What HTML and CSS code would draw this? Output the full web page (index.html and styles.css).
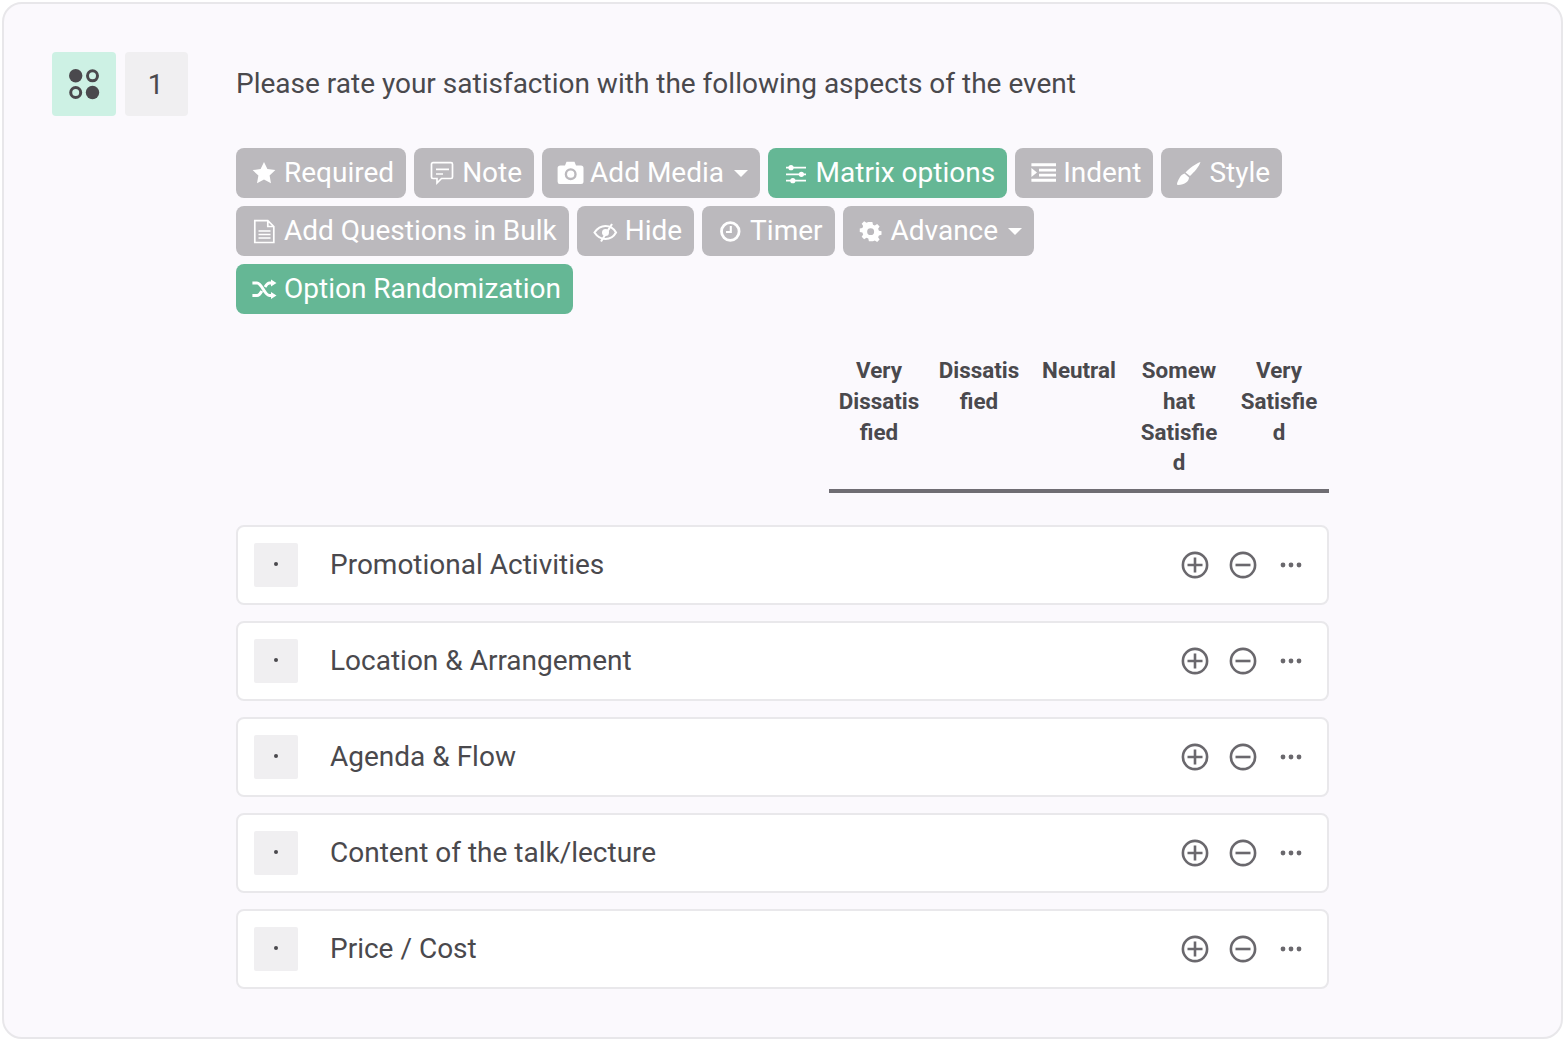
FILE: index.html
```html
<!DOCTYPE html>
<html lang="en">
<head>
<meta charset="utf-8">
<title>Matrix question</title>
<link rel="stylesheet" href="styles.css">
</head>
<body>
<main class="card">
  <div class="question-head">
    <div class="type-badge">
      <svg class="type-icon" viewBox="0 0 32 32"><circle cx="7.700" cy="7.800" r="6.700"/><circle cx="24.500" cy="7.800" r="5" class="ring"/><circle cx="7.700" cy="24.500" r="5" class="ring"/><circle cx="24.500" cy="24.500" r="6.700"/></svg>
    </div>
    <div class="num-badge">1</div>
    <div class="question-text">Please rate your satisfaction with the following aspects of the event</div>
  </div>

  <div class="body">
    <div class="toolbar">
      <button class="tool"><svg class="ic" viewBox="0 0 24 24"><path class="f" d="M12 1l3.400 7 8 1.100-5.800 5.400 1.400 7.700-7-3.700-7 3.700 1.400-7.700L.6 9.100l8-1.100z"/></svg>Required</button>
      <button class="tool"><svg class="ic" viewBox="0 0 24 24"><path class="s" d="M3 1.700h18a1.500 1.500 0 0 1 1.500 1.500v12.800a1.500 1.500 0 0 1-1.500 1.500H11.500L7 22v-4.500H3A1.500 1.500 0 0 1 1.500 16V3.200A1.500 1.500 0 0 1 3 1.700z"/><path class="s" d="M6 8.300h13M6 13h7"/></svg>Note</button>
      <button class="tool"><svg class="ic" viewBox="0 0 24 24"><path class="f" fill-rule="evenodd" d="M2.500 4.500h4.500L8.500.7h8L18 4.500h5a2.500 2.500 0 0 1 2.500 2.500v13.500a2.500 2.500 0 0 1-2.500 2.500h-20.500A2.500 2.500 0 0 1-.4 20.500V7a2.900 2.500 0 0 1 2.900-2.500zm10.200 2.700a6 6 0 1 0 0 12 6 6 0 0 0 0-12z"/><circle class="f" cx="12.700" cy="13.200" r="3.600"/></svg>Add Media<span class="caret"></span></button>
      <button class="tool on tight"><svg class="ic" viewBox="0 0 24 24"><path class="s" d="M2 6.700h20M2 13.300h20M2 19.700h20"/><circle class="f" cx="7" cy="6.700" r="2.600"/><circle class="f" cx="17.400" cy="13.300" r="2.600"/><circle class="f" cx="8.800" cy="19.700" r="2.600"/></svg>Matrix options</button>
      <button class="tool"><svg class="ic" viewBox="0 0 24 24"><path class="f" d="M.4 2.300H25v3H.4zM8 7.700h17v2.700H8zM8 12.700h17v2.700H8zM.4 17.800H25v3H.4zM.4 7l5.600 4.500L.4 16z"/></svg>Indent</button>
      <button class="tool"><svg class="ic" viewBox="0 0 24 24"><path class="f" d="M23.500 1C22 6 17 11 13 15l-4.500-3.500C12 7.500 18 3 23.500 1z"/><path class="f" d="M7.500 12.500l4.500 4C12 20 8 24 1 24c-1.500 0-1-2-.5-3C2 18 3 14 7.500 12.500z"/></svg>Style</button>
      <button class="tool"><svg class="ic" viewBox="0 0 24 24"><path class="s" d="M2.800 1.700h13l6 5.800v16H2.800zM15.800 1.700v5.800h6M6.500 12h12M6.500 15.500h12M6.500 19h12"/></svg>Add Questions in Bulk</button>
      <button class="tool"><svg class="ic" viewBox="0 0 24 24"><path class="s bold" d="M1.500 13.500C4.500 9 8 7 12.500 7s8 2 10.500 6.500c-2.500 4.500-6 6.500-10.500 6.500S4.500 18 1.500 13.500z"/><circle class="f" cx="12.500" cy="13.500" r="3.500"/><path class="s bold" d="M19 5L8 22.500"/></svg>Hide</button>
      <button class="tool"><svg class="ic" viewBox="0 0 24 24"><circle class="s thick" cx="12.300" cy="12.500" r="8.800"/><path class="s bold" d="M12.800 7v6H8"/></svg>Timer</button>
      <button class="tool"><svg class="ic" viewBox="0 0 24 24"><path class="f" transform="translate(1.200 2.200) scale(.87)" fill-rule="evenodd" d="M10 1h4l.7 3.100 2.100.9 2.700-1.700 2.800 2.800-1.700 2.700.9 2.100 3 .7v4l-3 .7-.9 2.100 1.700 2.700-2.800 2.800-2.700-1.700-2.100.9L14 23h-4l-.7-3.100-2.100-.9-2.700 1.700-2.800-2.800 1.700-2.700-.9-2.100-3-.7v-4l3-.7.9-2.100-1.700-2.700 2.800-2.800 2.700 1.700 2.100-.9zm2 7a4 4 0 1 0 0 8 4 4 0 0 0 0-8z"/></svg>Advance<span class="caret"></span></button>
      <button class="tool on"><svg class="ic" viewBox="0 0 24 24"><path class="s heavy" d="M.4 6h4.600c5 0 7.500 12.500 12.500 12.500h2.500M.4 18.500h4.600c2 0 3.500-2 4.800-4.500M13 10c1.300-2.200 2.700-4 4.500-4h2.500"/><path class="f" d="M19 2.500L24.500 6 19 9.500zM19 15L24.500 18.500 19 22z"/></svg>Option Randomization</button>
    </div>

    <div class="matrix-head">
      <div class="col">Very Dissatisfied</div>
      <div class="col">Dissatisfied</div>
      <div class="col">Neutral</div>
      <div class="col">Somewhat Satisfied</div>
      <div class="col">Very Satisfied</div>
    </div>

    <div class="rows">
      <div class="row">
        <div class="handle"><span class="dot"></span></div>
        <div class="label">Promotional Activities</div>
        <div class="actions">
          <svg class="act" viewBox="0 0 28 28"><circle cx="14" cy="14" r="12.100"/><path d="M14 6.500v15M6.500 14h15"/></svg>
          <svg class="act" viewBox="0 0 28 28"><circle cx="14" cy="14" r="12.100"/><path d="M6.500 14h15"/></svg>
          <svg class="act more" viewBox="0 0 28 28"><circle cx="6" cy="14" r="2.400"/><circle cx="14" cy="14" r="2.400"/><circle cx="22" cy="14" r="2.400"/></svg>
        </div>
      </div>
      <div class="row">
        <div class="handle"><span class="dot"></span></div>
        <div class="label">Location &amp; Arrangement</div>
        <div class="actions">
          <svg class="act" viewBox="0 0 28 28"><circle cx="14" cy="14" r="12.100"/><path d="M14 6.500v15M6.500 14h15"/></svg>
          <svg class="act" viewBox="0 0 28 28"><circle cx="14" cy="14" r="12.100"/><path d="M6.500 14h15"/></svg>
          <svg class="act more" viewBox="0 0 28 28"><circle cx="6" cy="14" r="2.400"/><circle cx="14" cy="14" r="2.400"/><circle cx="22" cy="14" r="2.400"/></svg>
        </div>
      </div>
      <div class="row">
        <div class="handle"><span class="dot"></span></div>
        <div class="label">Agenda &amp; Flow</div>
        <div class="actions">
          <svg class="act" viewBox="0 0 28 28"><circle cx="14" cy="14" r="12.100"/><path d="M14 6.500v15M6.500 14h15"/></svg>
          <svg class="act" viewBox="0 0 28 28"><circle cx="14" cy="14" r="12.100"/><path d="M6.500 14h15"/></svg>
          <svg class="act more" viewBox="0 0 28 28"><circle cx="6" cy="14" r="2.400"/><circle cx="14" cy="14" r="2.400"/><circle cx="22" cy="14" r="2.400"/></svg>
        </div>
      </div>
      <div class="row">
        <div class="handle"><span class="dot"></span></div>
        <div class="label">Content of the talk/lecture</div>
        <div class="actions">
          <svg class="act" viewBox="0 0 28 28"><circle cx="14" cy="14" r="12.100"/><path d="M14 6.500v15M6.500 14h15"/></svg>
          <svg class="act" viewBox="0 0 28 28"><circle cx="14" cy="14" r="12.100"/><path d="M6.500 14h15"/></svg>
          <svg class="act more" viewBox="0 0 28 28"><circle cx="6" cy="14" r="2.400"/><circle cx="14" cy="14" r="2.400"/><circle cx="22" cy="14" r="2.400"/></svg>
        </div>
      </div>
      <div class="row">
        <div class="handle"><span class="dot"></span></div>
        <div class="label">Price / Cost</div>
        <div class="actions">
          <svg class="act" viewBox="0 0 28 28"><circle cx="14" cy="14" r="12.100"/><path d="M14 6.500v15M6.500 14h15"/></svg>
          <svg class="act" viewBox="0 0 28 28"><circle cx="14" cy="14" r="12.100"/><path d="M6.500 14h15"/></svg>
          <svg class="act more" viewBox="0 0 28 28"><circle cx="6" cy="14" r="2.400"/><circle cx="14" cy="14" r="2.400"/><circle cx="22" cy="14" r="2.400"/></svg>
        </div>
      </div>
    </div>
  </div>
</main>
</body>
</html>
```

FILE: styles.css
```css
* { box-sizing: border-box; }

html, body { height: 100%; }

body {
  margin: 0;
  padding: 2px;
  background: #fff;
  font-family: Roboto, "Liberation Sans", sans-serif;
  color: #4a494d;
}

.card {
  width: 1561px;
  height: 1037px;
  background: #fbf9fd;
  border: 2px solid #e8e7ea;
  border-radius: 20px;
  padding: 48px;
}

.question-head {
  display: flex;
  gap: 9px;
  align-items: flex-start;
}

.type-badge,
.num-badge {
  width: 64px;
  height: 64px;
  border-radius: 4px;
  display: flex;
  align-items: center;
  justify-content: center;
  flex: none;
}

.type-badge { background: #cdf1e4; }
.num-badge { background: #f0eff1; font-size: 28px; width: 63px; padding-right: 2px; }

.type-icon { width: 32px; height: 32px; fill: #4a494d; }
.type-icon .ring { fill: none; stroke: #4a494d; stroke-width: 3; }

.question-text {
  font-size: 28px;
  line-height: 64px;
  margin-left: 39px;
  height: 64px;
}

.body {
  margin-left: 184px;
  width: 1093px;
}

.toolbar {
  display: flex;
  flex-wrap: wrap;
  gap: 8px;
  margin-top: 32px;
}

.tool {
  display: inline-flex;
  align-items: center;
  height: 50px;
  padding: 0 12px 0 16px;
  border: 0;
  border-radius: 8px;
  background: #bbb9bd;
  color: #fff;
  font: 400 28px/50px Roboto, "Liberation Sans", sans-serif;
  white-space: nowrap;
}

.tool.on { background: #65b795; }

.ic { width: 24px; height: 24px; margin-right: 8px; flex: none; overflow: visible; }
.tool.tight .ic { margin-right: 7.600px; }
.ic .f { fill: #fff; }
.ic .s { fill: none; stroke: #fff; stroke-width: 1.700; }
.ic .s.bold { stroke-width: 2.100; }
.ic .s.thick { stroke-width: 2.800; }
.ic .s.heavy { stroke-width: 3; }

.caret {
  width: 0;
  height: 0;
  margin-left: 10px;
  border-left: 7px solid transparent;
  border-right: 7px solid transparent;
  border-top: 7px solid #fff;
}

.matrix-head {
  display: grid;
  grid-template-columns: repeat(5, 100px);
  width: 500px;
  margin-left: auto;
  margin-top: 41px;
  padding-bottom: 11px;
  border-bottom: 4px solid #6f6d73;
}

.col {
  padding: 0 8px;
  font-size: 22.400px;
  font-weight: 700;
  line-height: 30.800px;
  text-align: center;
  overflow-wrap: anywhere;
}

.rows {
  display: flex;
  flex-direction: column;
  gap: 16px;
  margin-top: 32px;
}

.row {
  display: flex;
  align-items: center;
  height: 80px;
  padding: 0 16px;
  background: #fff;
  border: 2px solid #e9e8eb;
  border-radius: 8px;
}

.handle {
  width: 44px;
  height: 44px;
  border-radius: 2px;
  background: #f0eff1;
  display: flex;
  align-items: center;
  justify-content: center;
  flex: none;
}

.dot {
  width: 4px;
  height: 4px;
  margin-bottom: 2px;
  border-radius: 50%;
  background: #4a494d;
}

.label {
  flex: 1;
  margin-left: 32px;
  margin-bottom: 2px;
  font-size: 28px;
}

.actions {
  display: flex;
  gap: 20px;
  margin-right: 6px;
}

.act {
  width: 28px;
  height: 28px;
  fill: none;
  stroke: #6a686d;
  stroke-width: 2.600;
}

.act.more { fill: #6a686d; stroke: none; }
```
